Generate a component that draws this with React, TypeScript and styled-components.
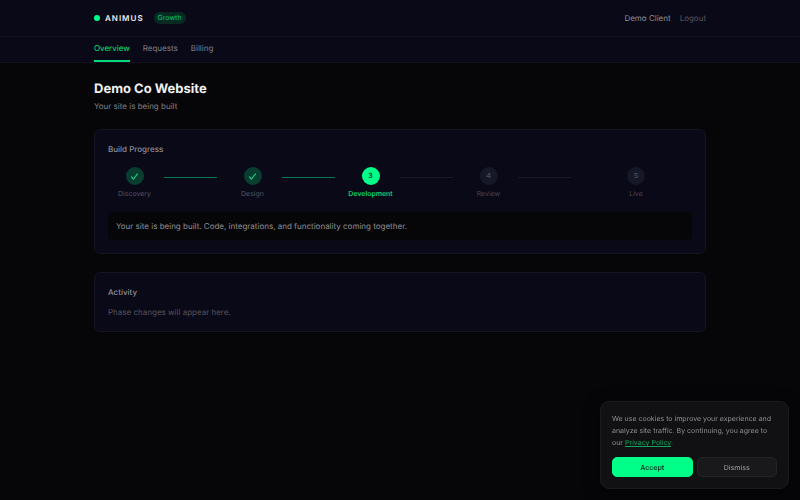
import React from "react";
import styled, { createGlobalStyle, css } from "styled-components";

const Global = createGlobalStyle`
  *, *::before, *::after { box-sizing: border-box; }
  body {
    margin: 0;
    background: #060608;
    color: #f0f0f2;
    font-family: Inter, "Liberation Sans", sans-serif;
    font-size: 8px;
    line-height: 12px;
    text-rendering: geometricPrecision;
  }
  h1, h2, p, ol { margin: 0; padding: 0; }
  button { font-family: inherit; text-rendering: inherit; cursor: pointer; }
`;

const Bar = styled.div`
  background: #0a0918;
  border-bottom: 1px solid #12111f;
`;

const Container = styled.div`
  width: 100%;
  max-width: 640px;
  margin: 0 auto;
  padding: 0 14px;
`;

const HeaderRow = styled(Container)`
  display: flex;
  align-items: center;
  justify-content: space-between;
  height: 36px;
`;

const Group = styled.div<{ $gap: number }>`
  display: flex;
  align-items: center;
  gap: ${(p) => p.$gap}px;
`;

const Logo = styled.a`
  display: flex;
  align-items: center;
  gap: 5px;
  color: #f0f0f2;
  font-size: 8px;
  font-weight: 600;
  letter-spacing: 1px;
  text-decoration: none;
`;

const Dot = styled.span`
  width: 6px;
  height: 6px;
  border-radius: 50%;
  background: #00ff88;
`;

const Badge = styled.span`
  padding: 0 4px;
  border-radius: 6px;
  background: #062a22;
  color: #09c971;
  font-size: 7px;
  font-weight: 400;
`;

const User = styled.span`
  color: #8f8e96;
`;

const Logout = styled.button`
  padding: 0;
  border: 0;
  background: none;
  color: #55545d;
  font-size: 8px;
`;

const Nav = styled(Container).attrs({ as: "nav" })`
  display: flex;
  gap: 13px;
`;

const Tab = styled.a<{ $active?: boolean }>`
  padding: 5px 0 6px;
  border-bottom: 2px solid ${(p) => (p.$active ? "#00d977" : "transparent")};
  color: ${(p) => (p.$active ? "#08e57b" : "#807f87")};
  text-decoration: none;
`;

const Main = styled(Container).attrs({ as: "main" })`
  padding-top: 17px;
  padding-bottom: 18px;
`;

const Title = styled.h1`
  font-size: 13px;
  line-height: 18px;
  font-weight: 700;
`;

const Subtitle = styled.p`
  margin: 2px 0 17px;
  color: #808084;
`;

const Card = styled.section`
  margin-bottom: 18px;
  padding: 13px;
  border: 1px solid #151422;
  border-radius: 6px;
  background: #0a0918;
`;

const CardTitle = styled.h2`
  margin-bottom: 8px;
  color: #8f8e96;
  font-size: 8px;
  line-height: 12px;
  font-weight: 500;
`;

const Steps = styled.ol`
  display: flex;
  gap: 6px;
  padding-top: 4px;
  list-style: none;
`;

const StepItem = styled.li`
  display: flex;
  flex: 1;
  min-width: 0;
`;

type State = "done" | "current" | "todo";

const StepBody = styled.div`
  display: flex;
  flex: 1 1 0;
  min-width: 0;
  flex-direction: column;
  align-items: center;
  gap: 3px;
`;

const Circle = styled.span<{ $state: State }>`
  display: flex;
  align-items: center;
  justify-content: center;
  width: 18px;
  height: 18px;
  border-radius: 50%;
  font-size: 7px;
  font-weight: 600;
  ${(p) =>
    p.$state === "done"
      ? css`background: #083d30; color: #1bd080;`
      : p.$state === "current"
        ? css`background: #00ff88; color: #06331f;`
        : css`background: #161727; color: #4c4d59;`}
`;

const StepLabel = styled.span<{ $state: State }>`
  font-size: 7px;
  white-space: nowrap;
  font-weight: ${(p) => (p.$state === "current" ? 500 : 400)};
  color: ${(p) => (p.$state === "current" ? "#08e57b" : p.$state === "done" ? "#55545d" : "#484751")};
`;

const Line = styled.span<{ $done: boolean }>`
  flex: 1 1 0;
  height: 1px;
  margin: 10px 3px 0;
  background: ${(p) => (p.$done ? "#0a7a4e" : "#1a1a29")};
`;

const Notice = styled.p`
  margin-top: 12px;
  padding: 8px;
  border-radius: 5px;
  background: #060608;
  color: #8f8f94;
`;

const Empty = styled.p`
  color: #55545d;
`;

const Cookie = styled.aside`
  position: fixed;
  right: 11px;
  bottom: 11px;
  width: 189px;
  padding: 11px;
  border: 1px solid #1b1b1d;
  border-radius: 9px;
  background: #111113;
  box-shadow: 0 4px 16px rgba(0, 0, 0, 0.5);
  color: #8f8f94;
  font-size: 7px;
`;

const CookieText = styled.p`
  margin-bottom: 8px;
  line-height: 12px;
`;

const PolicyLink = styled.a`
  color: #13a45e;
  text-decoration: underline;
`;

const Actions = styled.div`
  display: flex;
  gap: 4px;
`;

const Action = styled.button<{ $primary?: boolean }>`
  flex: 1;
  height: 20px;
  padding: 0;
  border: 1px solid ${(p) => (p.$primary ? "#00ff88" : "#242426")};
  border-radius: 5px;
  background: ${(p) => (p.$primary ? "#00ff88" : "#19191b")};
  color: ${(p) => (p.$primary ? "#06331f" : "#8f8f94")};
  font-size: 7px;
  font-weight: ${(p) => (p.$primary ? 600 : 500)};
`;

const steps: { name: string; state: State }[] = [
  { name: "Discovery", state: "done" },
  { name: "Design", state: "done" },
  { name: "Development", state: "current" },
  { name: "Review", state: "todo" },
  { name: "Live", state: "todo" },
];

const Check = () => (
  <svg width="9" height="9" viewBox="0 0 24 24" fill="none" stroke="currentColor" strokeWidth="3" strokeLinecap="round" strokeLinejoin="round" aria-label="Done">
    <path d="M4 13l5 6L20 5" />
  </svg>
);

export default function App() {
  return (
    <>
      <Global />
      <header>
        <Bar>
          <HeaderRow>
            <Group $gap={10}>
              <Logo href="#"><Dot />ANIMUS</Logo>
              <Badge>Growth</Badge>
            </Group>
            <Group $gap={9}>
              <User>Demo Client</User>
              <Logout type="button">Logout</Logout>
            </Group>
          </HeaderRow>
        </Bar>
        <Bar>
          <Nav>
            <Tab href="#overview" $active aria-current="page">Overview</Tab>
            <Tab href="#requests">Requests</Tab>
            <Tab href="#billing">Billing</Tab>
          </Nav>
        </Bar>
      </header>
      <Main>
        <Title>Demo Co Website</Title>
        <Subtitle>Your site is being built</Subtitle>
        <Card>
          <CardTitle>Build Progress</CardTitle>
          <Steps>
            {steps.map((s, i) => (
              <StepItem key={s.name}>
                <StepBody>
                  <Circle $state={s.state}>{s.state === "done" ? <Check /> : i + 1}</Circle>
                  <StepLabel $state={s.state}>{s.name}</StepLabel>
                </StepBody>
                {i < steps.length - 1 && <Line $done={s.state === "done"} />}
              </StepItem>
            ))}
          </Steps>
          <Notice>Your site is being built. Code, integrations, and functionality coming together.</Notice>
        </Card>
        <Card>
          <CardTitle>Activity</CardTitle>
          <Empty>Phase changes will appear here.</Empty>
        </Card>
      </Main>
      <Cookie aria-label="Cookie consent">
        <CookieText>
          We use cookies to improve your experience and analyze site traffic. By continuing, you agree to our{" "}
          <PolicyLink href="#privacy">Privacy Policy</PolicyLink>.
        </CookieText>
        <Actions>
          <Action type="button" $primary>Accept</Action>
          <Action type="button">Dismiss</Action>
        </Actions>
      </Cookie>
    </>
  );
}
